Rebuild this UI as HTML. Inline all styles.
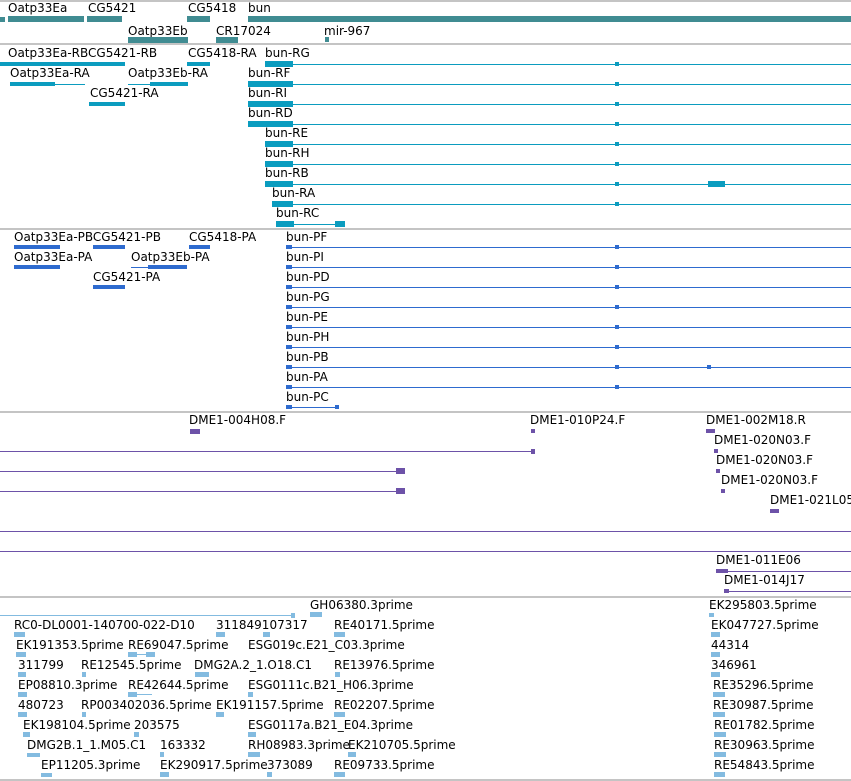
<!DOCTYPE html>
<html><head><meta charset="utf-8"><style>
body{margin:0;width:851px;height:781px;background:#fff;position:relative;overflow:hidden;font-family:"DejaVu Sans","Liberation Sans",sans-serif;font-size:12px;}
div{position:absolute;}
.t{line-height:12px;color:#000;white-space:nowrap;}
.s{left:0;width:851px;height:2px;background:#c4c4c4;}
.g{background:#408c92;}
.r{background:#0b9cbf;}
.p{background:#2e6bcf;}
.v{background:#6d52a8;}
.e{background:#83bbe0;}
</style></head><body>
<div class="s" style="top:0"></div>
<div class="s" style="top:43px"></div>
<div class="s" style="top:228px"></div>
<div class="s" style="top:411px"></div>
<div class="s" style="top:596px"></div>
<div class="s" style="top:779px"></div>

<!-- genes -->
<div class="t" style="left:8px;top:2px">Oatp33Ea</div>
<div class="t" style="left:88px;top:2px">CG5421</div>
<div class="t" style="left:188px;top:2px">CG5418</div>
<div class="t" style="left:248px;top:2px">bun</div>
<div class="g" style="left:0;top:17px;width:5px;height:5px"></div>
<div class="g" style="left:8px;top:16px;width:76px;height:6px"></div>
<div class="g" style="left:87px;top:16px;width:35px;height:6px"></div>
<div class="g" style="left:187px;top:16px;width:23px;height:6px"></div>
<div class="g" style="left:248px;top:16px;width:603px;height:6px"></div>
<div class="t" style="left:128px;top:25px">Oatp33Eb</div>
<div class="t" style="left:216px;top:25px">CR17024</div>
<div class="t" style="left:324px;top:25px">mir-967</div>
<div class="g" style="left:128px;top:37px;width:60px;height:6px"></div>
<div class="g" style="left:216px;top:37px;width:22px;height:6px"></div>
<div class="g" style="left:325px;top:37px;width:4px;height:5px"></div>

<!-- transcripts -->
<div class="t" style="left:8px;top:47px">Oatp33Ea-RBCG5421-RB</div>
<div class="t" style="left:188px;top:47px">CG5418-RA</div>
<div class="t" style="left:265px;top:47px">bun-RG</div>
<div class="r" style="left:0;top:62px;width:125px;height:4px"></div>
<div class="r" style="left:187px;top:62px;width:23px;height:4px"></div>
<div class="r" style="left:265px;top:61px;width:28px;height:6px"></div>
<div class="r" style="left:265px;top:64px;width:586px;height:1px"></div>
<div class="t" style="left:10px;top:67px">Oatp33Ea-RA</div>
<div class="t" style="left:128px;top:67px">Oatp33Eb-RA</div>
<div class="t" style="left:248px;top:67px">bun-RF</div>
<div class="r" style="left:10px;top:82px;width:45px;height:4px"></div>
<div class="r" style="left:10px;top:84px;width:75px;height:1px"></div>
<div class="r" style="left:128px;top:84px;width:60px;height:1px"></div>
<div class="r" style="left:150px;top:82px;width:38px;height:4px"></div>
<div class="r" style="left:248px;top:81px;width:45px;height:6px"></div>
<div class="r" style="left:248px;top:84px;width:603px;height:1px"></div>
<div class="t" style="left:90px;top:87px">CG5421-RA</div>
<div class="t" style="left:248px;top:87px">bun-RI</div>
<div class="r" style="left:89px;top:102px;width:36px;height:4px"></div>
<div class="r" style="left:248px;top:101px;width:45px;height:6px"></div>
<div class="r" style="left:248px;top:104px;width:603px;height:1px"></div>
<div class="t" style="left:248px;top:107px">bun-RD</div>
<div class="r" style="left:248px;top:121px;width:45px;height:6px"></div>
<div class="r" style="left:248px;top:124px;width:603px;height:1px"></div>
<div class="t" style="left:265px;top:127px">bun-RE</div>
<div class="r" style="left:265px;top:141px;width:28px;height:6px"></div>
<div class="r" style="left:265px;top:144px;width:586px;height:1px"></div>
<div class="t" style="left:265px;top:147px">bun-RH</div>
<div class="r" style="left:265px;top:161px;width:28px;height:6px"></div>
<div class="r" style="left:265px;top:164px;width:586px;height:1px"></div>
<div class="t" style="left:265px;top:167px">bun-RB</div>
<div class="r" style="left:265px;top:181px;width:28px;height:6px"></div>
<div class="r" style="left:265px;top:184px;width:586px;height:1px"></div>
<div class="r" style="left:708px;top:181px;width:17px;height:6px"></div>
<div class="t" style="left:272px;top:187px">bun-RA</div>
<div class="r" style="left:272px;top:201px;width:21px;height:6px"></div>
<div class="r" style="left:272px;top:204px;width:579px;height:1px"></div>
<div class="t" style="left:276px;top:207px">bun-RC</div>
<div class="r" style="left:276px;top:221px;width:18px;height:6px"></div>
<div class="r" style="left:276px;top:224px;width:69px;height:1px"></div>
<div class="r" style="left:335px;top:221px;width:10px;height:6px"></div>
<div class="r" style="left:615px;top:62px;width:4px;height:4px"></div>
<div class="r" style="left:615px;top:82px;width:4px;height:4px"></div>
<div class="r" style="left:615px;top:102px;width:4px;height:4px"></div>
<div class="r" style="left:615px;top:122px;width:4px;height:4px"></div>
<div class="r" style="left:615px;top:142px;width:4px;height:4px"></div>
<div class="r" style="left:615px;top:162px;width:4px;height:4px"></div>
<div class="r" style="left:615px;top:182px;width:4px;height:4px"></div>
<div class="r" style="left:615px;top:202px;width:4px;height:4px"></div>

<!-- proteins -->
<div class="t" style="left:14px;top:231px">Oatp33Ea-PBCG5421-PB</div>
<div class="t" style="left:189px;top:231px">CG5418-PA</div>
<div class="t" style="left:286px;top:231px">bun-PF</div>
<div class="p" style="left:14px;top:245px;width:46px;height:4px"></div>
<div class="p" style="left:93px;top:245px;width:32px;height:4px"></div>
<div class="p" style="left:189px;top:245px;width:21px;height:4px"></div>
<div class="t" style="left:14px;top:251px">Oatp33Ea-PA</div>
<div class="t" style="left:131px;top:251px">Oatp33Eb-PA</div>
<div class="t" style="left:286px;top:251px">bun-PI</div>
<div class="p" style="left:14px;top:265px;width:46px;height:4px"></div>
<div class="p" style="left:131px;top:267px;width:56px;height:1px"></div>
<div class="p" style="left:148px;top:265px;width:39px;height:4px"></div>
<div class="t" style="left:93px;top:271px">CG5421-PA</div>
<div class="t" style="left:286px;top:271px">bun-PD</div>
<div class="p" style="left:93px;top:285px;width:32px;height:4px"></div>
<div class="t" style="left:286px;top:291px">bun-PG</div>
<div class="t" style="left:286px;top:311px">bun-PE</div>
<div class="t" style="left:286px;top:331px">bun-PH</div>
<div class="t" style="left:286px;top:351px">bun-PB</div>
<div class="t" style="left:286px;top:371px">bun-PA</div>
<div class="t" style="left:286px;top:391px">bun-PC</div>
<div class="p" style="left:286px;top:247px;width:565px;height:1px"></div>
<div class="p" style="left:286px;top:267px;width:565px;height:1px"></div>
<div class="p" style="left:286px;top:287px;width:565px;height:1px"></div>
<div class="p" style="left:286px;top:307px;width:565px;height:1px"></div>
<div class="p" style="left:286px;top:327px;width:565px;height:1px"></div>
<div class="p" style="left:286px;top:347px;width:565px;height:1px"></div>
<div class="p" style="left:286px;top:367px;width:565px;height:1px"></div>
<div class="p" style="left:286px;top:387px;width:565px;height:1px"></div>
<div class="p" style="left:286px;top:407px;width:53px;height:1px"></div>
<div class="p" style="left:286px;top:245px;width:6px;height:4px"></div>
<div class="p" style="left:286px;top:265px;width:6px;height:4px"></div>
<div class="p" style="left:286px;top:285px;width:6px;height:4px"></div>
<div class="p" style="left:286px;top:305px;width:6px;height:4px"></div>
<div class="p" style="left:286px;top:325px;width:6px;height:4px"></div>
<div class="p" style="left:286px;top:345px;width:6px;height:4px"></div>
<div class="p" style="left:286px;top:365px;width:6px;height:4px"></div>
<div class="p" style="left:286px;top:385px;width:6px;height:4px"></div>
<div class="p" style="left:286px;top:405px;width:6px;height:4px"></div>
<div class="p" style="left:335px;top:405px;width:4px;height:4px"></div>
<div class="p" style="left:615px;top:245px;width:4px;height:4px"></div>
<div class="p" style="left:615px;top:265px;width:4px;height:4px"></div>
<div class="p" style="left:615px;top:285px;width:4px;height:4px"></div>
<div class="p" style="left:615px;top:305px;width:4px;height:4px"></div>
<div class="p" style="left:615px;top:325px;width:4px;height:4px"></div>
<div class="p" style="left:615px;top:345px;width:4px;height:4px"></div>
<div class="p" style="left:615px;top:365px;width:4px;height:4px"></div>
<div class="p" style="left:615px;top:385px;width:4px;height:4px"></div>
<div class="p" style="left:707px;top:365px;width:4px;height:4px"></div>

<!-- purple -->
<div class="t" style="left:189px;top:414px">DME1-004H08.F</div>
<div class="t" style="left:530px;top:414px">DME1-010P24.F</div>
<div class="t" style="left:706px;top:414px">DME1-002M18.R</div>
<div class="v" style="left:190px;top:429px;width:10px;height:5px"></div>
<div class="v" style="left:531px;top:429px;width:4px;height:4px"></div>
<div class="v" style="left:706px;top:429px;width:9px;height:4px"></div>
<div class="t" style="left:714px;top:434px">DME1-020N03.F</div>
<div class="v" style="left:714px;top:449px;width:4px;height:4px"></div>
<div class="t" style="left:716px;top:454px">DME1-020N03.F</div>
<div class="v" style="left:716px;top:469px;width:4px;height:4px"></div>
<div class="t" style="left:721px;top:474px">DME1-020N03.F</div>
<div class="v" style="left:721px;top:489px;width:4px;height:4px"></div>
<div class="t" style="left:770px;top:494px">DME1-021L05</div>
<div class="v" style="left:770px;top:509px;width:9px;height:4px"></div>
<div class="v" style="left:0;top:451px;width:535px;height:1px"></div>
<div class="v" style="left:531px;top:449px;width:4px;height:5px"></div>
<div class="v" style="left:0;top:471px;width:405px;height:1px"></div>
<div class="v" style="left:396px;top:468px;width:9px;height:6px"></div>
<div class="v" style="left:0;top:491px;width:405px;height:1px"></div>
<div class="v" style="left:396px;top:488px;width:9px;height:6px"></div>
<div class="v" style="left:0;top:531px;width:851px;height:1px"></div>
<div class="v" style="left:0;top:551px;width:851px;height:1px"></div>
<div class="t" style="left:716px;top:554px">DME1-011E06</div>
<div class="v" style="left:716px;top:569px;width:12px;height:4px"></div>
<div class="v" style="left:716px;top:571px;width:135px;height:1px"></div>
<div class="t" style="left:724px;top:574px">DME1-014J17</div>
<div class="v" style="left:724px;top:589px;width:5px;height:4px"></div>
<div class="v" style="left:724px;top:591px;width:127px;height:1px"></div>

<!-- ESTs -->
<div class="e" style="left:0;top:615px;width:295px;height:1px"></div>
<div class="e" style="left:291px;top:613px;width:4px;height:5px"></div>
<div class="t" style="left:310px;top:599px">GH06380.3prime</div>
<div class="e" style="left:310px;top:612px;width:12px;height:5px"></div>
<div class="t" style="left:709px;top:599px">EK295803.5prime</div>
<div class="e" style="left:709px;top:613px;width:5px;height:4px"></div>

<div class="t" style="left:14px;top:619px">RC0-DL0001-140700-022-D10</div>
<div class="t" style="left:216px;top:619px">311849107317</div>
<div class="t" style="left:334px;top:619px">RE40171.5prime</div>
<div class="t" style="left:711px;top:619px">EK047727.5prime</div>
<div class="e" style="left:14px;top:632px;width:11px;height:5px"></div>
<div class="e" style="left:216px;top:632px;width:9px;height:5px"></div>
<div class="e" style="left:263px;top:632px;width:7px;height:5px"></div>
<div class="e" style="left:334px;top:632px;width:11px;height:5px"></div>
<div class="e" style="left:711px;top:632px;width:9px;height:5px"></div>

<div class="t" style="left:16px;top:639px">EK191353.5prime</div>
<div class="t" style="left:128px;top:639px">RE69047.5prime</div>
<div class="t" style="left:248px;top:639px">ESG019c.E21_C03.3prime</div>
<div class="t" style="left:711px;top:639px">44314</div>
<div class="e" style="left:16px;top:652px;width:10px;height:5px"></div>
<div class="e" style="left:128px;top:654px;width:27px;height:1px"></div>
<div class="e" style="left:128px;top:652px;width:9px;height:5px"></div>
<div class="e" style="left:146px;top:652px;width:9px;height:5px"></div>
<div class="e" style="left:711px;top:652px;width:9px;height:5px"></div>

<div class="t" style="left:18px;top:659px">311799</div>
<div class="t" style="left:81px;top:659px">RE12545.5prime</div>
<div class="t" style="left:194px;top:659px">DMG2A.2_1.O18.C1</div>
<div class="t" style="left:334px;top:659px">RE13976.5prime</div>
<div class="t" style="left:711px;top:659px">346961</div>
<div class="e" style="left:18px;top:672px;width:8px;height:5px"></div>
<div class="e" style="left:82px;top:672px;width:4px;height:5px"></div>
<div class="e" style="left:195px;top:672px;width:14px;height:5px"></div>
<div class="e" style="left:335px;top:672px;width:5px;height:5px"></div>
<div class="e" style="left:711px;top:672px;width:9px;height:5px"></div>

<div class="t" style="left:18px;top:679px">EP08810.3prime</div>
<div class="t" style="left:128px;top:679px">RE42644.5prime</div>
<div class="t" style="left:248px;top:679px">ESG0111c.B21_H06.3prime</div>
<div class="t" style="left:713px;top:679px">RE35296.5prime</div>
<div class="e" style="left:18px;top:692px;width:9px;height:5px"></div>
<div class="e" style="left:128px;top:694px;width:24px;height:1px"></div>
<div class="e" style="left:128px;top:692px;width:9px;height:5px"></div>
<div class="e" style="left:248px;top:692px;width:5px;height:5px"></div>
<div class="e" style="left:713px;top:692px;width:12px;height:5px"></div>

<div class="t" style="left:18px;top:699px">480723</div>
<div class="t" style="left:81px;top:699px">RP003402036.5prime</div>
<div class="t" style="left:216px;top:699px">EK191157.5prime</div>
<div class="t" style="left:334px;top:699px">RE02207.5prime</div>
<div class="t" style="left:713px;top:699px">RE30987.5prime</div>
<div class="e" style="left:18px;top:712px;width:9px;height:5px"></div>
<div class="e" style="left:82px;top:712px;width:4px;height:5px"></div>
<div class="e" style="left:216px;top:712px;width:8px;height:5px"></div>
<div class="e" style="left:334px;top:712px;width:11px;height:5px"></div>
<div class="e" style="left:713px;top:712px;width:12px;height:5px"></div>

<div class="t" style="left:23px;top:719px">EK198104.5prime</div>
<div class="t" style="left:134px;top:719px">203575</div>
<div class="t" style="left:248px;top:719px">ESG0117a.B21_E04.3prime</div>
<div class="t" style="left:714px;top:719px">RE01782.5prime</div>
<div class="e" style="left:23px;top:732px;width:7px;height:5px"></div>
<div class="e" style="left:134px;top:732px;width:5px;height:5px"></div>
<div class="e" style="left:248px;top:732px;width:8px;height:5px"></div>
<div class="e" style="left:714px;top:732px;width:12px;height:5px"></div>

<div class="t" style="left:27px;top:739px">DMG2B.1_1.M05.C1</div>
<div class="t" style="left:160px;top:739px">163332</div>
<div class="t" style="left:248px;top:739px">RH08983.3prime</div>
<div class="t" style="left:348px;top:739px">EK210705.5prime</div>
<div class="t" style="left:714px;top:739px">RE30963.5prime</div>
<div class="e" style="left:27px;top:753px;width:13px;height:4px"></div>
<div class="e" style="left:160px;top:752px;width:4px;height:5px"></div>
<div class="e" style="left:248px;top:752px;width:12px;height:5px"></div>
<div class="e" style="left:348px;top:752px;width:8px;height:5px"></div>
<div class="e" style="left:714px;top:752px;width:12px;height:5px"></div>

<div class="t" style="left:41px;top:759px">EP11205.3prime</div>
<div class="t" style="left:160px;top:759px">EK290917.5prime</div>
<div class="t" style="left:267px;top:759px">373089</div>
<div class="t" style="left:334px;top:759px">RE09733.5prime</div>
<div class="t" style="left:714px;top:759px">RE54843.5prime</div>
<div class="e" style="left:41px;top:773px;width:11px;height:4px"></div>
<div class="e" style="left:160px;top:772px;width:9px;height:5px"></div>
<div class="e" style="left:267px;top:772px;width:5px;height:5px"></div>
<div class="e" style="left:334px;top:772px;width:11px;height:5px"></div>
<div class="e" style="left:714px;top:772px;width:11px;height:5px"></div>
</body></html>
